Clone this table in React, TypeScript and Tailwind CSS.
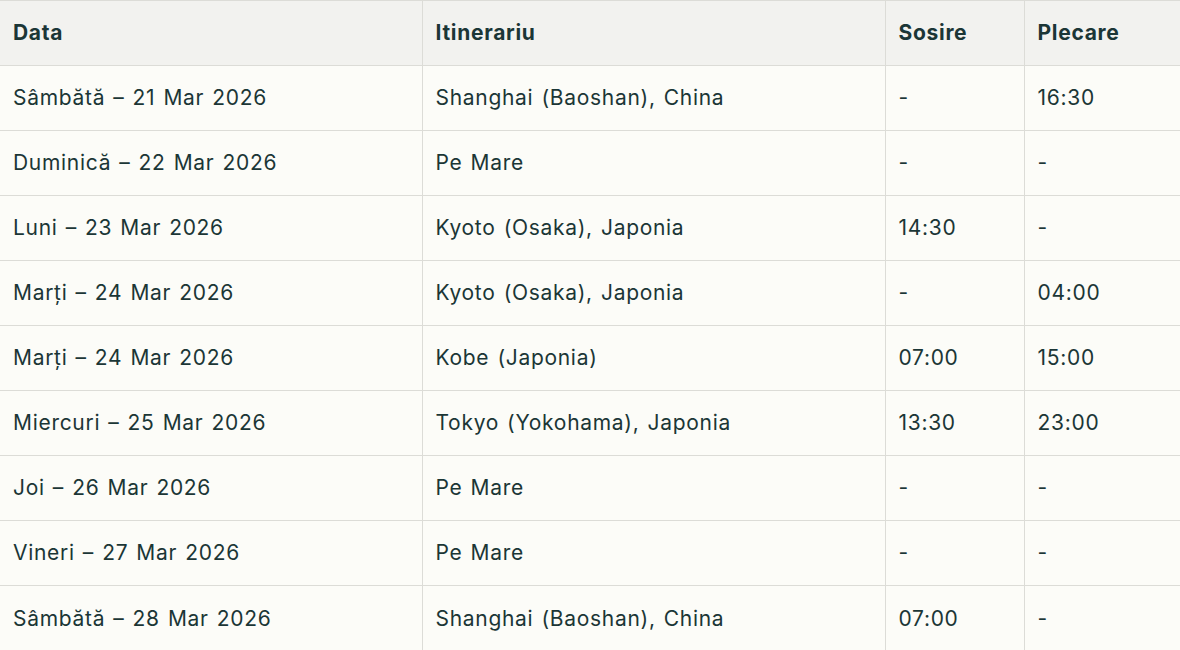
import React from "react";

const rows = [
  ["Sâmbătă – 21 Mar 2026", "Shanghai (Baoshan), China", "-", "16:30"],
  ["Duminică – 22 Mar 2026", "Pe Mare", "-", "-"],
  ["Luni – 23 Mar 2026", "Kyoto (Osaka), Japonia", "14:30", "-"],
  ["Marți – 24 Mar 2026", "Kyoto (Osaka), Japonia", "-", "04:00"],
  ["Marți – 24 Mar 2026", "Kobe (Japonia)", "07:00", "15:00"],
  ["Miercuri – 25 Mar 2026", "Tokyo (Yokohama), Japonia", "13:30", "23:00"],
  ["Joi – 26 Mar 2026", "Pe Mare", "-", "-"],
  ["Vineri – 27 Mar 2026", "Pe Mare", "-", "-"],
  ["Sâmbătă – 28 Mar 2026", "Shanghai (Baoshan), China", "07:00", "-"],
];

const App: React.FC = () => {
  return (
    <div className="min-h-[650px] bg-[#fcfcf8] font-['Inter',sans-serif] text-[#1b3636] text-[21px] tracking-[0.7px] [word-spacing:1.5px]">
      <table className="w-full border-collapse table-fixed">
        <colgroup>
          <col className="w-[422px]" />
          <col className="w-[463px]" />
          <col className="w-[139px]" />
          <col />
        </colgroup>
        <thead>
          <tr className="h-[65px] bg-[#f2f2ef] text-left font-semibold">
            <th className="border-t border-r border-[#dcdcd7] px-[13px]">Data</th>
            <th className="border-t border-r border-[#dcdcd7] px-[13px]">Itinerariu</th>
            <th className="border-t border-r border-[#dcdcd7] px-[13px]">Sosire</th>
            <th className="border-t border-[#dcdcd7] px-[13px]">Plecare</th>
          </tr>
        </thead>
        <tbody>
          {rows.map((r, i) => (
            <tr key={i} className="h-[65px] border-t border-[#dcdcd7]">
              {r.map((c, j) => (
                <td
                  key={j}
                  className={
                    j < 3
                      ? "border-r border-[#dcdcd7] px-[13px]"
                      : "px-[13px]"
                  }
                >
                  {c}
                </td>
              ))}
            </tr>
          ))}
        </tbody>
      </table>
    </div>
  );
};

export default App;
